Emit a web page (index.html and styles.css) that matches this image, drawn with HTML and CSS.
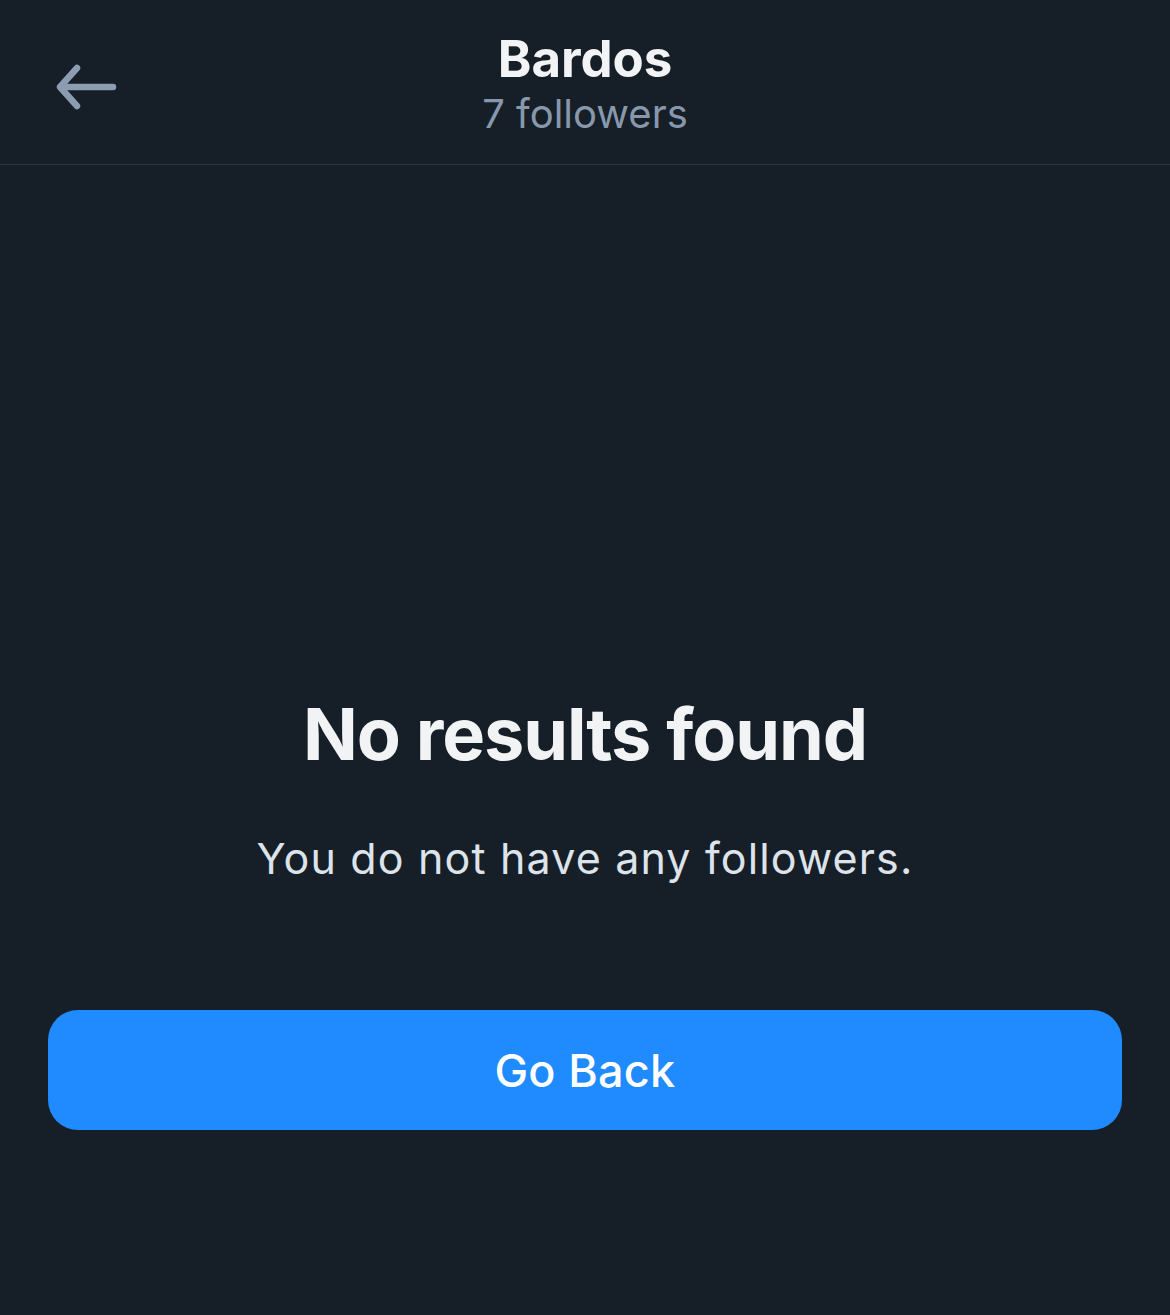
FILE: index.html
```html
<!DOCTYPE html>
<html lang="en">
<head>
<meta charset="utf-8">
<title>Bardos followers</title>
<link rel="stylesheet" href="styles.css">
</head>
<body>
<div class="screen">
  <header class="header">
    <div class="header-left">
      <button class="back" aria-label="Back">
        <svg width="64" height="48" viewBox="0 0 64 48" fill="none" stroke="currentColor" stroke-width="6.5" stroke-linecap="round" stroke-linejoin="round">
          <path d="M58 24H6"/>
          <path d="M22 5L5 24L22 43"/>
        </svg>
      </button>
    </div>
    <div class="header-title">
      <div class="title">Bardos</div>
      <div class="subtitle">7 followers</div>
    </div>
    <div class="header-right"></div>
  </header>
  <main class="empty">
    <h1 class="empty-title">No results found</h1>
    <p class="empty-text">You do not have any followers.</p>
    <button class="go-back">Go Back</button>
  </main>
</div>
</body>
</html>
```
FILE: styles.css
```css
html, body {
  margin: 0;
  padding: 0;
  background: #161e27;
}
body {
  font-family: Inter, "Noto Sans", sans-serif;
  color: #f1f3f5;
}
.screen {
  width: 1170px;
  min-height: 1315px;
  background: #161e27;
}
.header {
  display: grid;
  grid-template-columns: 1fr auto 1fr;
  align-items: center;
  height: 164px;
  border-bottom: 1px solid #2b3644;
  box-sizing: content-box;
}
.header-left {
  display: flex;
  align-items: center;
  padding-left: 55px;
  padding-top: 10px;
}
.back {
  background: none;
  border: 0;
  padding: 0;
  margin: 0;
  color: #8d9db1;
  display: flex;
  cursor: pointer;
}
.header-title {
  display: flex;
  flex-direction: column;
  align-items: center;
  padding-top: 5px;
}
.title {
  font-size: 51px;
  font-weight: 700;
  line-height: 58px;
  color: #f1f3f5;
  letter-spacing: -0.1px;
}
.subtitle {
  font-size: 40px;
  font-weight: 400;
  line-height: 50px;
  margin-top: 1px;
  color: #8798ac;
}
.empty {
  display: flex;
  flex-direction: column;
  align-items: center;
  padding: 526px 48px 0;
}
.empty-title {
  margin: 0;
  font-size: 72px;
  line-height: 86px;
  font-weight: 700;
  color: #f1f3f5;
  letter-spacing: -1.1px;
}
.empty-text {
  margin: 54px 0 0;
  font-size: 43px;
  line-height: 54px;
  font-weight: 400;
  color: #dde3ea;
  letter-spacing: 1.15px;
}
.go-back {
  margin-top: 125px;
  width: 100%;
  height: 120px;
  border: 0;
  border-radius: 30px;
  background: #208bfe;
  color: #ffffff;
  font-family: Inter, "Noto Sans", sans-serif;
  font-size: 45px;
  font-weight: 500;
  letter-spacing: 0.3px;
  cursor: pointer;
}
```
